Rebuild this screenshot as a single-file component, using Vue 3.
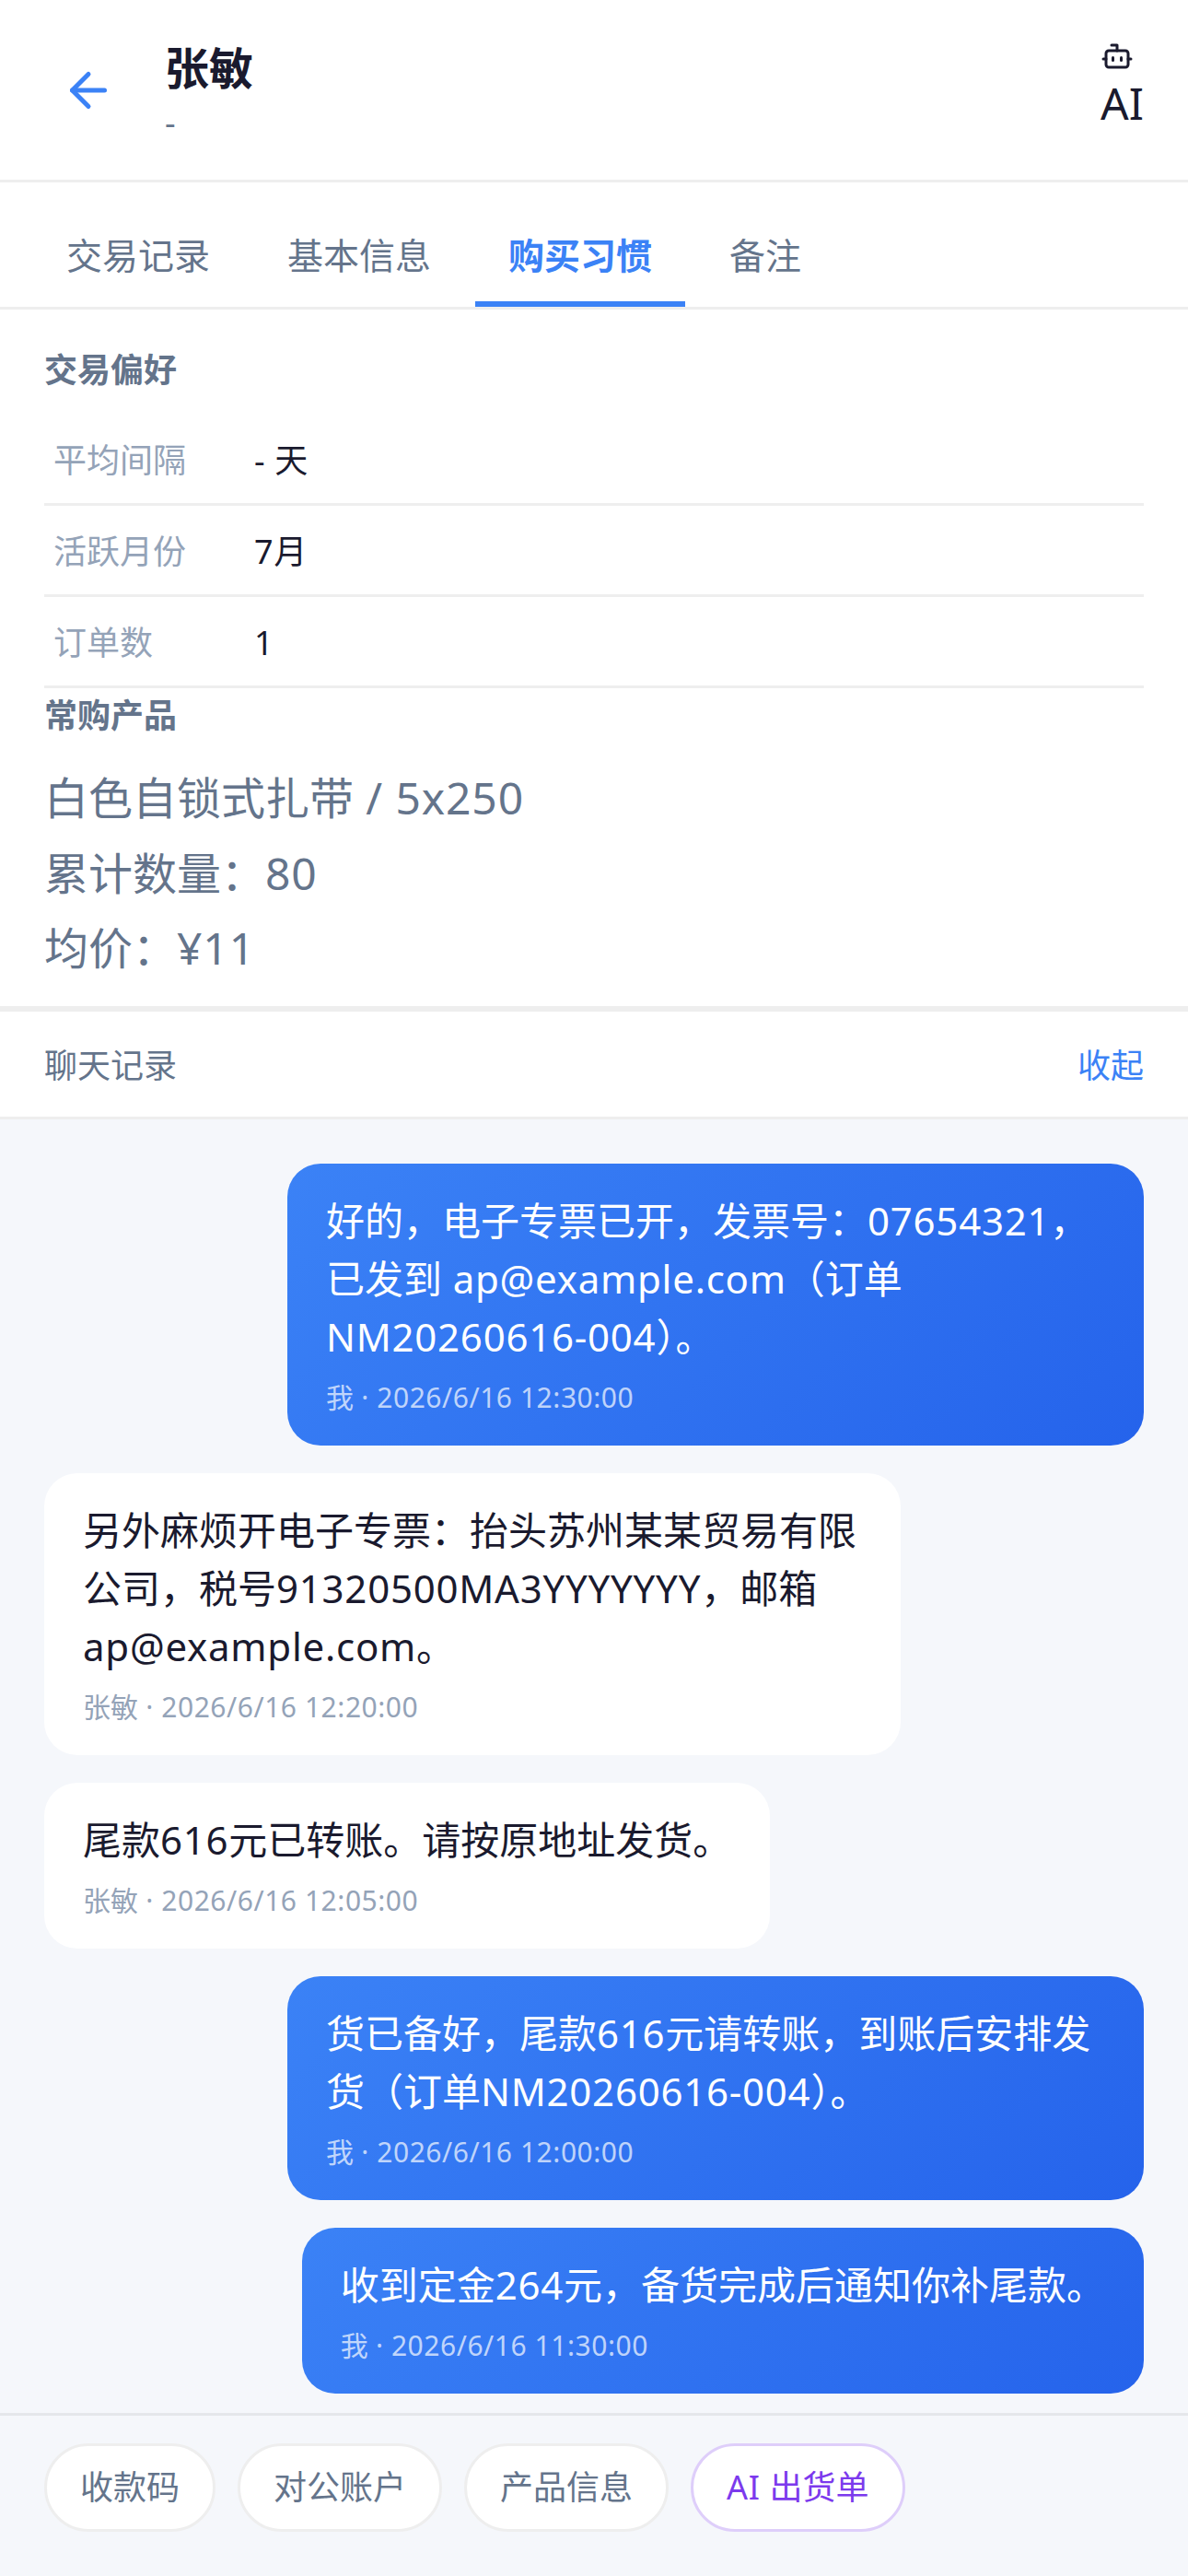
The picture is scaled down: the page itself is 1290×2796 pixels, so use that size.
<template>
  <div class="page">
    <header class="top-bar">
      <svg class="back-icon" xmlns="http://www.w3.org/2000/svg" width="60" height="60" viewBox="0 0 24 24" fill="none" stroke="currentColor" stroke-width="2" stroke-linecap="round" stroke-linejoin="round">
        <path d="M19 12H5"></path>
        <path d="m12 19-7-7 7-7"></path>
      </svg>
      <div class="who">
        <div class="who-name">{{ customer.name }}</div>
        <div class="who-sub">{{ customer.company }}</div>
      </div>
      <div class="ai-btn">
        <svg xmlns="http://www.w3.org/2000/svg" width="36" height="36" viewBox="0 0 24 24" fill="none" stroke="currentColor" stroke-width="2" stroke-linecap="round" stroke-linejoin="round">
          <path d="M12 8V4H8"></path>
          <rect x="4" y="8" width="16" height="12" rx="2"></rect>
          <path d="M2 14h2"></path>
          <path d="M20 14h2"></path>
          <path d="M15 13v2"></path>
          <path d="M9 13v2"></path>
        </svg>
        <span>AI</span>
      </div>
    </header>

    <nav class="tabs">
      <div v-for="tab in tabs" :key="tab" class="tab" :class="{ active: tab === activeTab }">{{ tab }}</div>
    </nav>

    <section class="habits">
      <h3 class="block-title">交易偏好</h3>
      <div class="stats">
        <div v-for="row in stats" :key="row.label" class="stat-row">
          <span class="stat-label">{{ row.label }}</span>
          <span class="stat-value">
            <template v-for="(run, i) in runs(row.value)" :key="i"><span v-if="run.latin" class="latin">{{ run.text }}</span><template v-else>{{ run.text }}</template></template>
          </span>
        </div>
      </div>
      <h3 class="block-title">常购产品</h3>
      <div class="product">
        <div v-for="line in productLines" :key="line">
          <template v-for="(run, i) in runs(line)" :key="i"><span v-if="run.latin" class="latin">{{ run.text }}</span><template v-else>{{ run.text }}</template></template>
        </div>
      </div>
    </section>

    <div class="chat-head">
      <span>聊天记录</span>
      <span class="chat-toggle">收起</span>
    </div>

    <div class="chat-list">
      <div v-for="msg in messages" :key="msg.time" class="bubble" :class="[msg.mine ? 'mine' : 'theirs', { wide: msg.lines.length > 1 }]">
        <div v-for="line in msg.lines" :key="line" class="bubble-text">
          <template v-for="(run, i) in runs(line)" :key="i"><span v-if="run.latin" class="latin">{{ run.text }}</span><template v-else>{{ run.text }}</template></template>
        </div>
        <div class="bubble-meta">
          {{ msg.mine ? '我' : customer.name }}<span class="latin"> · {{ msg.time }}</span>
        </div>
      </div>
    </div>

    <footer class="actions">
      <div class="chip">收款码</div>
      <div class="chip">对公账户</div>
      <div class="chip">产品信息</div>
      <div class="chip chip-ai"><span class="latin">AI </span>出货单</div>
    </footer>
  </div>
</template>

<script setup>
const customer = { name: '张敏', company: '-' };

const tabs = ['交易记录', '基本信息', '购买习惯', '备注'];
const activeTab = '购买习惯';

const stats = [
  { label: '平均间隔', value: '- 天' },
  { label: '活跃月份', value: '7月' },
  { label: '订单数', value: '1' },
];

const productLines = ['白色自锁式扎带 / 5x250', '累计数量：80', '均价：¥11'];

const messages = [
  {
    mine: true,
    time: '2026/6/16 12:30:00',
    lines: ['好的，电子专票已开，发票号：07654321，', '已发到 ap@example.com（订单', 'NM20260616-004）。'],
  },
  {
    mine: false,
    time: '2026/6/16 12:20:00',
    lines: ['另外麻烦开电子专票：抬头苏州某某贸易有限', '公司，税号91320500MA3YYYYYYY，邮箱', 'ap@example.com。'],
  },
  { mine: false, time: '2026/6/16 12:05:00', lines: ['尾款616元已转账。请按原地址发货。'] },
  {
    mine: true,
    time: '2026/6/16 12:00:00',
    lines: ['货已备好，尾款616元请转账，到账后安排发', '货（订单NM20260616-004）。'],
  },
  { mine: true, time: '2026/6/16 11:30:00', lines: ['收到定金264元，备货完成后通知你补尾款。'] },
];

// latin runs get a touch of tracking, CJK stays on its 1em grid
const runs = (text) =>
  text.match(/[\x20-\x7e¥]+|[^\x20-\x7e¥]+/g).map((part) => ({
    text: part,
    latin: /^[\x20-\x7e¥]/.test(part),
  }));
</script>

<style>
html, body {
  margin: 0;
  background: #fff;
}
</style>

<style scoped>
.page {
  width: 1290px;
  height: 2796px;
  display: flex;
  flex-direction: column;
  overflow: hidden;
  background: #f5f7fb;
  color: #1a1a2e;
  font-family: "Noto Sans", "Noto Sans CJK SC", sans-serif;
  line-height: 1.7;
}

.latin {
  letter-spacing: 0.018em;
}

.top-bar {
  height: 195px;
  flex-shrink: 0;
  display: flex;
  align-items: center;
  gap: 53px;
  padding: 0 48px 0 66px;
  background: #fff;
  border-bottom: 3px solid #eee;
}

.back-icon {
  color: #3b82f6;
  flex-shrink: 0;
}

.who {
  flex: 1;
  padding-bottom: 10px;
}

.who-name {
  font-size: 48px;
  font-weight: 700;
}

.who-sub {
  font-size: 36px;
  line-height: 38px;
  color: #64748b;
}

.ai-btn {
  display: flex;
  flex-direction: column;
  align-items: flex-start;
  padding-bottom: 8px;
  font-size: 48px;
  line-height: 66px;
}

.tabs {
  height: 135px;
  flex-shrink: 0;
  display: flex;
  gap: 12px;
  padding: 0 36px;
  background: #fff;
  border-bottom: 3px solid #eee;
}

.tab {
  height: 135px;
  box-sizing: border-box;
  padding: 46px 36px 0;
  font-size: 39px;
  color: #64748b;
  border-bottom: 6px solid transparent;
}

.tab.active {
  color: #3b82f6;
  font-weight: 700;
  border-bottom-color: #3b82f6;
}

.habits {
  flex-shrink: 0;
  padding: 36px 48px 22.2px;
  background: #fff;
  border-bottom: 6px solid #eee;
}

.block-title {
  margin: 0 0 18px;
  font-size: 36px;
  line-height: 60px;
  font-weight: 700;
  color: #64748b;
}

.stat-row {
  height: 99px;
  box-sizing: border-box;
  display: flex;
  align-items: center;
  padding: 3px 0 0 10px;
  font-size: 36px;
  border-bottom: 3px solid #eee;
}

.stat-label {
  width: 218px;
  color: #94a3b8;
}

.stat-value {
  color: #1a1a2e;
}

.product {
  font-size: 48px;
  color: #64748b;
}

.chat-head {
  height: 114px;
  flex-shrink: 0;
  display: flex;
  align-items: center;
  justify-content: space-between;
  padding: 0 48px;
  font-size: 36px;
  color: #64748b;
  background: #fff;
  border-bottom: 3px solid #eee;
}

.chat-head span {
  padding-top: 3px;
}

.chat-toggle {
  color: #3b82f6;
}

.chat-list {
  flex: 1;
  min-height: 0;
  overflow: hidden;
  display: flex;
  flex-direction: column;
  gap: 30px;
  padding: 48px 48px 0;
}

.bubble {
  max-width: 930px;
  box-sizing: border-box;
  padding: 30px 42px;
  border-radius: 36px;
}

.bubble.wide {
  width: 930px;
}

.bubble-text {
  font-size: 42px;
  line-height: 63px;
}

.bubble-meta {
  margin-top: 12px;
  font-size: 30px;
  line-height: 45px;
}

.mine {
  align-self: flex-end;
  color: #fff;
  background: linear-gradient(135deg, #3b82f6, #2563eb);
}

.mine .bubble-meta {
  color: rgba(255, 255, 255, 0.7);
}

.theirs {
  align-self: flex-start;
  background: #fff;
  color: #1a1a2e;
}

.theirs .bubble-meta {
  color: #94a3b8;
}

.actions {
  flex-shrink: 0;
  display: flex;
  gap: 24px;
  padding: 30px 48px 48px;
  background: #f5f7fb;
  border-top: 3px solid #e5e7eb;
}

.chip {
  padding: 18px 36px;
  font-size: 36px;
  line-height: 54px;
  color: #64748b;
  background: #fff;
  border: 3px solid #eee;
  border-radius: 60px;
}

.chip-ai {
  color: #7c3aed;
  border-color: #decefa;
}
</style>
